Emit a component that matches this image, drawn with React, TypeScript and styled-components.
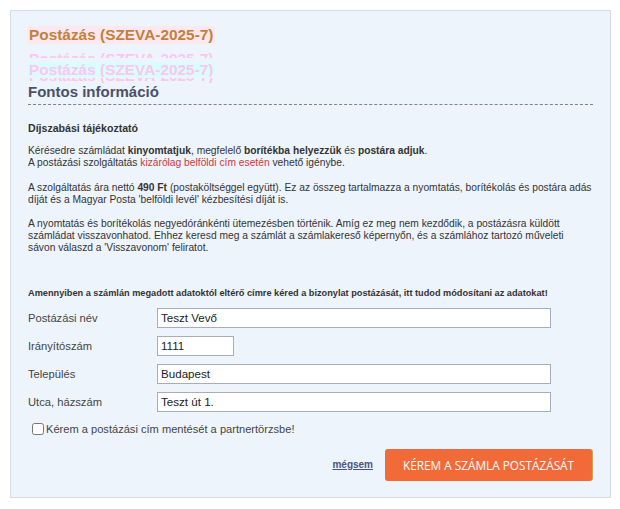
import React, { useState } from 'react';
import styled, { createGlobalStyle } from 'styled-components';

const GlobalStyle = createGlobalStyle`
    html, body {
        margin: 0;
        padding: 0;
        background: #ffffff;
    }
    body {
        font-family: 'Liberation Sans', Arial, sans-serif;
    }
`;

const Page = styled.div`
    padding: 10px 9px 10px 10px;
`;

const Panel = styled.div`
    width: 565px;
    height: 459px;
    background: #eef4fc;
    border: 1px solid #d5dce8;
    padding: 15px 17px 12px 17px;
    display: flex;
    flex-direction: column;
`;

const Title = styled.div`
    align-self: flex-start;
    font-size: 15.4px;
    font-weight: 700;
    line-height: 18px;
    color: #c3803a;
    background: #fde8ef;
    padding: 0 2px 0 1px;
`;

const Ghost = styled.div`
    display: flex;
    flex-direction: column;
    align-items: flex-start;
    margin-top: 9px;
`;

const GhostSlice = styled.div<{ $h: number; $shift: number; $gap: number; $bg?: string }>`
    height: ${(p) => p.$h}px;
    margin-top: ${(p) => p.$gap}px;
    overflow: hidden;
    background: ${(p) => p.$bg || 'transparent'};
    padding: 0 2px 0 1px;
    & span {
        display: block;
        margin-top: ${(p) => -p.$shift}px;
        font-size: 15.4px;
        font-weight: 700;
        line-height: 18px;
        color: #fcc6ef;
        white-space: nowrap;
    }
`;

const Heading = styled.div`
    font-size: 15px;
    font-weight: 700;
    line-height: 17px;
    color: #4b5169;
    padding-bottom: 4px;
    border-bottom: 1px dashed #7d8190;
`;

const Info = styled.div`
    margin-top: 17px;
    font-size: 10.25px;
    line-height: 12px;
    color: #333333;
    & p {
        margin: 0 0 12.5px;
    }
`;

const InfoTitle = styled.p`
    font-size: 10.6px;
    font-weight: 700;
    color: #333333;
    && {
        margin-bottom: 11px;
    }
`;

const Red = styled.span`
    color: #d4353d;
`;

const Notice = styled.div`
    margin-top: 20px;
    font-size: 9.2px;
    font-weight: 700;
    color: #333333;
    line-height: 13px;
    white-space: nowrap;
`;

const Form = styled.div`
    margin-top: 8px;
    display: flex;
    flex-direction: column;
    gap: 8px;
`;

const Row = styled.label`
    display: flex;
    align-items: center;
    height: 20px;
`;

const Label = styled.span`
    width: 129px;
    font-size: 11.2px;
    color: #444444;
`;

const Input = styled.input<{ $w: number }>`
    box-sizing: border-box;
    width: ${(p) => p.$w}px;
    height: 20px;
    border: 1px solid #a9adb6;
    background: #ffffff;
    padding: 0 3px;
    font-family: 'Liberation Sans', Arial, sans-serif;
    font-size: 11.6px;
    color: #222222;
    outline: none;
`;

const CheckRow = styled.label`
    margin-top: 11px;
    margin-left: 4px;
    display: flex;
    align-items: center;
    gap: 2px;
    font-size: 11.1px;
    color: #444444;
`;

const Box = styled.input`
    width: 12px;
    height: 12px;
    margin: 0;
    accent-color: #4b5169;
`;

const Actions = styled.div`
    margin-top: 14px;
    display: flex;
    justify-content: flex-end;
    align-items: center;
    gap: 12px;
    padding-right: 1px;
`;

const Cancel = styled.a`
    font-size: 10px;
    font-weight: 700;
    color: #4b5382;
    text-decoration: underline;
    cursor: pointer;
`;

const Submit = styled.button`
    width: 207px;
    height: 32px;
    border: none;
    border-radius: 3px;
    background: #f36a39;
    color: #ffffff;
    font-family: 'Open Sans', 'Liberation Sans', sans-serif;
    font-size: 11.8px;
    font-weight: 400;
    text-transform: uppercase;
    cursor: pointer;
    box-shadow: 1px 0 0 #c9a45a;
`;

const TITLE = 'Postázás (SZEVA-2025-7)';

export default function App(): JSX.Element {
    const [name, setName] = useState('Teszt Vevő');
    const [zip, setZip] = useState('1111');
    const [city, setCity] = useState('Budapest');
    const [street, setStreet] = useState('Teszt út 1.');
    const [save, setSave] = useState(false);

    return (
        <Page>
            <GlobalStyle />
            <Panel>
                <Title>{TITLE}</Title>
                <Ghost aria-hidden="true">
                    <GhostSlice $h={5} $shift={3} $gap={0}>
                        <span>{TITLE}</span>
                    </GhostSlice>
                    <GhostSlice $h={15} $shift={1} $gap={4} $bg="#d9fcfd">
                        <span>{TITLE}</span>
                    </GhostSlice>
                    <GhostSlice $h={5} $shift={11} $gap={1}>
                        <span>{TITLE}</span>
                    </GhostSlice>
                </Ghost>
                <Heading>Fontos információ</Heading>
                <Info>
                    <InfoTitle>Díjszabási tájékoztató</InfoTitle>
                    <p>
                        Kérésedre számládat <b>kinyomtatjuk</b>, megfelelő <b>borítékba helyezzük</b> és{' '}
                        <b>postára adjuk</b>.
                        <br />
                        A postázási szolgáltatás <Red>kizárólag belföldi cím esetén</Red> vehető igénybe.
                    </p>
                    <p>
                        A szolgáltatás ára nettó <b>490 Ft</b> (postaköltséggel együtt). Ez az összeg tartalmazza a
                        nyomtatás, borítékolás és postára adás díját és a Magyar Posta 'belföldi levél' kézbesítési
                        díját is.
                    </p>
                    <p>
                        A nyomtatás és borítékolás negyedóránkénti ütemezésben történik. Amíg ez meg nem kezdődik, a
                        postázásra küldött számládat visszavonhatod. Ehhez keresd meg a számlát a számlakereső
                        képernyőn, és a számlához tartozó műveleti sávon válaszd a 'Visszavonom' feliratot.
                    </p>
                </Info>
                <Notice>
                    Amennyiben a számlán megadott adatoktól eltérő címre kéred a bizonylat postázását, itt tudod
                    módosítani az adatokat!
                </Notice>
                <Form>
                    <Row>
                        <Label>Postázási név</Label>
                        <Input $w={394} value={name} onChange={(e) => setName(e.target.value)} />
                    </Row>
                    <Row>
                        <Label>Irányítószám</Label>
                        <Input $w={77} value={zip} onChange={(e) => setZip(e.target.value)} />
                    </Row>
                    <Row>
                        <Label>Település</Label>
                        <Input $w={394} value={city} onChange={(e) => setCity(e.target.value)} />
                    </Row>
                    <Row>
                        <Label>Utca, házszám</Label>
                        <Input $w={394} value={street} onChange={(e) => setStreet(e.target.value)} />
                    </Row>
                </Form>
                <CheckRow>
                    <Box type="checkbox" checked={save} onChange={(e) => setSave(e.target.checked)} />
                    Kérem a postázási cím mentését a partnertörzsbe!
                </CheckRow>
                <Actions>
                    <Cancel>mégsem</Cancel>
                    <Submit type="button">Kérem a számla postázását</Submit>
                </Actions>
            </Panel>
        </Page>
    );
}
